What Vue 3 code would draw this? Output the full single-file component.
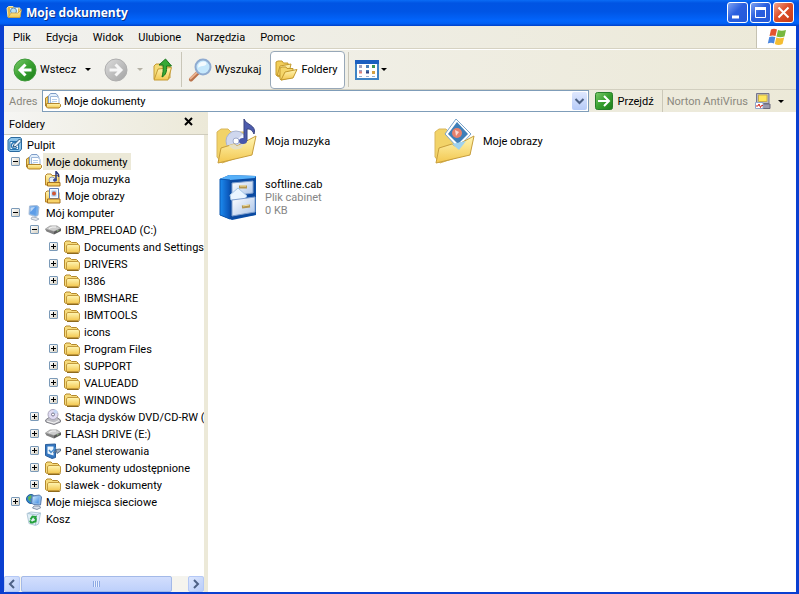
<script setup>
import { ref } from 'vue';

const menu = ['Plik', 'Edycja', 'Widok', 'Ulubione', 'Narzędzia', 'Pomoc'];

const tree = [
	{ name: 'Pulpit', icon: 'desktop', level: 0 },
	{ name: 'Moje dokumenty', icon: 'documents', level: 1, state: 'open' },
	{ name: 'Moja muzyka', icon: 'music-small', level: 2 },
	{ name: 'Moje obrazy', icon: 'pictures-small', level: 2 },
	{ name: 'Mój komputer', icon: 'computer', level: 1, state: 'open' },
	{ name: 'IBM_PRELOAD (C:)', icon: 'drive', level: 2, state: 'open' },
	{ name: 'Documents and Settings', icon: 'folder', level: 3, state: 'closed' },
	{ name: 'DRIVERS', icon: 'folder', level: 3, state: 'closed' },
	{ name: 'I386', icon: 'folder', level: 3, state: 'closed' },
	{ name: 'IBMSHARE', icon: 'folder', level: 3 },
	{ name: 'IBMTOOLS', icon: 'folder', level: 3, state: 'closed' },
	{ name: 'icons', icon: 'folder', level: 3 },
	{ name: 'Program Files', icon: 'folder', level: 3, state: 'closed' },
	{ name: 'SUPPORT', icon: 'folder', level: 3, state: 'closed' },
	{ name: 'VALUEADD', icon: 'folder', level: 3, state: 'closed' },
	{ name: 'WINDOWS', icon: 'folder', level: 3, state: 'closed' },
	{ name: 'Stacja dysków DVD/CD-RW (', icon: 'disc', level: 2, state: 'closed' },
	{ name: 'FLASH DRIVE (E:)', icon: 'drive', level: 2, state: 'closed' },
	{ name: 'Panel sterowania', icon: 'panel', level: 2, state: 'closed' },
	{ name: 'Dokumenty udostępnione', icon: 'folder', level: 2, state: 'closed' },
	{ name: 'slawek - dokumenty', icon: 'folder', level: 2, state: 'closed' },
	{ name: 'Moje miejsca sieciowe', icon: 'network', level: 1, state: 'closed' },
	{ name: 'Kosz', icon: 'bin', level: 1 }
];

const files = [
	{ name: 'Moja muzyka', icon: 'music' },
	{ name: 'Moje obrazy', icon: 'pictures' },
	{ name: 'softline.cab', icon: 'cabinet', info: ['Plik cabinet', '0 KB'] }
];

const selected = ref('Moje dokumenty');
</script>

<template>
	<svg class="sprite" aria-hidden="true">
		<defs>
			<linearGradient id="g-folder" x1="0" y1="0" x2="0" y2="1">
				<stop offset="0" stop-color="#fff6b4" />
				<stop offset="1" stop-color="#f3c74f" />
			</linearGradient>
			<linearGradient id="g-green" x1="0" y1="0" x2="1" y2="1">
				<stop offset="0" stop-color="#7ccb6b" />
				<stop offset="0.5" stop-color="#38a02f" />
				<stop offset="1" stop-color="#1b7d1a" />
			</linearGradient>
			<linearGradient id="g-gray" x1="0" y1="0" x2="1" y2="1">
				<stop offset="0" stop-color="#dcdcdc" />
				<stop offset="1" stop-color="#a2a2a2" />
			</linearGradient>
			<linearGradient id="g-blue" x1="0" y1="0" x2="1" y2="1">
				<stop offset="0" stop-color="#cfe8ff" />
				<stop offset="1" stop-color="#3f8ade" />
			</linearGradient>
			<linearGradient id="g-cab" x1="0" y1="0" x2="1" y2="0">
				<stop offset="0" stop-color="#1c8cf0" />
				<stop offset="1" stop-color="#0a51b4" />
			</linearGradient>
			<linearGradient id="g-drawer" x1="0" y1="0" x2="1" y2="1">
				<stop offset="0" stop-color="#ffffff" />
				<stop offset="1" stop-color="#a9c3e8" />
			</linearGradient>
		</defs>

		<symbol id="folder" viewBox="0 0 16 16">
			<path d="M0.500 12.500V3.500L2 2H6L7.500 3.500H12.500L14 5V13.500H2z" fill="#f6db7c" stroke="#b4892c" />
			<path d="M2.500 13.500V6.500L4 5.500H14L15.500 6.500V12.500L14 13.500z" fill="url(#g-folder)" stroke="#c39a3c" />
			<path d="M3 14.500H14.500L15.500 13.500" fill="none" stroke="#8e6a1e" />
		</symbol>
		<symbol id="title-folder" viewBox="0 0 16 16">
			<path d="M1 4L2.500 2.500H7L8.500 4H14V13H2z" fill="#e2b84b" stroke="#f6e9a8" />
			<path d="M4 4H12V11H4z" fill="#eef8ff" />
			<circle cx="7.500" cy="7" r="3" fill="#b9def5" stroke="#5b8fb5" />
			<path d="M2 13.500L5 9H12L15.500 5.500L14 13.500z" fill="url(#g-folder)" stroke="#c59631" stroke-width="0.700" />
		</symbol>
		<symbol id="documents" viewBox="0 0 16 16">
			<path d="M0.500 13V5L3 3.500V13.500z" fill="#f5d56c" stroke="#ad822a" />
			<path d="M3.500 12V3L5.500 0.500H11L13 3V12z" fill="#e4f0fc" stroke="#7f9dc8" />
			<path d="M5.500 10V3.500H12L14 5.500V11z" fill="#fff" stroke="#9db7da" />
			<path d="M7 6.500H12M7 8.500H12" stroke="#b4cdea" />
			<path d="M1.500 14V10.500H14.500L15.500 11.500V13.500L14 15H2.500z" fill="url(#g-folder)" stroke="#b3842b" />
		</symbol>
		<symbol id="music-small" viewBox="0 0 16 16">
			<path d="M0.500 14V4.500L2 3H6L7 4.500H14V14z" fill="url(#g-folder)" stroke="#b5822a" />
			<circle cx="7" cy="9" r="3" fill="#e6eefa" stroke="#8895b8" />
			<path d="M2.500 15V11.500H15V15z" fill="#f7cf62" stroke="#a8721f" />
			<path d="M11 9V0.500L13.500 3.500V6" fill="none" stroke="#2b377d" stroke-width="1.500" />
			<ellipse cx="10" cy="9" rx="2" ry="1.500" fill="#3b4a98" />
		</symbol>
		<symbol id="pictures-small" viewBox="0 0 16 16">
			<path d="M0.500 14V4.500L2 3H6L7 4.500H14V14z" fill="url(#g-folder)" stroke="#b5822a" />
			<path d="M4.500 0.500H13.500V10.500H4.500z" fill="#f8fbff" stroke="#5f7fb6" />
			<path d="M6.500 2.500H11.500V8.500H6.500z" fill="#a4cbef" />
			<circle cx="9" cy="5.500" r="2" fill="#d05532" />
			<path d="M2.500 15V11H15V15z" fill="#f8d36a" stroke="#a8721f" />
		</symbol>
		<symbol id="desktop" viewBox="0 0 16 16">
			<path d="M1 3L4 0.500H13.500L14.500 2V12L12.500 14.500H3L1 13z" fill="#8cc4ea" stroke="#29699f" />
			<path d="M3 4.500H11.500V12.500H3z" fill="#fff" stroke="#2d76ae" />
			<path d="M9.500 6.500A3 3 0 1 0 10 10" fill="none" stroke="#2c7ab8" stroke-width="1.500" />
			<path d="M6 10L7 7.500L12.500 2L14.500 4L9 9.500z" fill="#e9f4fc" stroke="#1d4f7c" />
		</symbol>
		<symbol id="computer" viewBox="0 0 16 16">
			<path d="M3.500 1L11 0.500L13 2L12 10.500L9.500 11.500L3 9.500z" fill="#75aeea" stroke="#a9bdd8" />
			<path d="M4.500 2L10.500 1.500L9.500 10L4 8.500z" fill="#5d9de8" />
			<path d="M6 12L10 12.500L13 14L10 15.500L5 14z" fill="#e4e8ee" stroke="#aab4c2" />
			<path d="M4.500 2.500L9 2L4.500 7z" fill="#fff" opacity="0.600" />
		</symbol>
		<symbol id="drive" viewBox="0 0 16 16">
			<path d="M0.500 7L5 4H12L15.500 6.500L9 9.500z" fill="#cdcdcd" stroke="#a6a6a6" />
			<path d="M0 7L9 9.500V12.500L1.500 9.500z" fill="#808080" />
			<path d="M9 9.500L16 6.500V9L9 12.500z" fill="#5a5a5a" />
			<path d="M4 6.500L7 5H11" fill="none" stroke="#f8f8f8" />
			<path d="M12 9L13.500 8.500" stroke="#9bc98c" />
		</symbol>
		<symbol id="disc" viewBox="0 0 16 16">
			<path d="M0.500 11L4 8.500H12L15.500 11V13L9 15.500L1 13z" fill="#bebec4" stroke="#818188" />
			<circle cx="8" cy="5.500" r="5" fill="#e1dcf3" stroke="#aaa7bb" />
			<path d="M8 5.500L9 0.500A5 5 0 0 1 13 4z" fill="#c6d6f4" />
			<circle cx="8" cy="5.500" r="1.500" fill="#fff" stroke="#77758d" />
			<path d="M2 12L9 14L14 11.500" fill="none" stroke="#f5f5f5" />
		</symbol>
		<symbol id="panel" viewBox="0 0 16 16">
			<path d="M0.500 1.500L10.500 1V14.500L7 15.500L0.500 12.500z" fill="#3477c0" stroke="#2b5e9c" />
			<path d="M2.500 3.500L8.500 3.500V12.500L2.500 10.500z" fill="#eff8ff" />
			<path d="M4 7L6 9.500L11 4.500" fill="none" stroke="#498dcc" stroke-width="1.500" />
			<path d="M8 9.500L12 8M11 6.500L15.500 6V8L12 10.500z" fill="#a3afbf" stroke="#60768e" />
		</symbol>
		<symbol id="network" viewBox="0 0 16 16">
			<circle cx="5" cy="5" r="4.500" fill="#3085cf" stroke="#235d98" />
			<path d="M2 3L5 1L6 3.500L4 5L5 8L2.500 6z" fill="#62b652" />
			<path d="M6 2L13.500 1L15.500 3L14.500 11L7.500 10.500L5.500 9z" fill="#8bb9ea" stroke="#5b7eaf" />
			<path d="M7 3L13 2.500L12.500 9.500L7 8.500z" fill="url(#g-blue)" />
			<path d="M8 12L13 12L15 13.500L11 15.500L6.500 14z" fill="#d9e0ea" stroke="#8392aa" />
		</symbol>
		<symbol id="bin" viewBox="0 0 16 16">
			<path d="M1 2.500L5 1L14.500 2L12.500 13L9.500 14.500L3 12.500z" fill="#e1eff7" stroke="#b3cad8" />
			<path d="M2 2.500L10.500 4L14.500 2M10.500 4L9.500 14" fill="none" stroke="#a9c2d2" />
			<path d="M4.500 8.500L6.500 5.500L9.500 6L8.500 8M10 7L9.500 10.500L7 11M4 9.500L5 11.500H7.500" fill="none" stroke="#23a13a" stroke-width="2" />
		</symbol>

		<symbol id="back" viewBox="0 0 24 24">
			<circle cx="12" cy="12" r="11" fill="url(#g-green)" stroke="#3f9a3a" />
			<path d="M18.500 12H7M12.500 6.500L7 12L12.500 17.500" fill="none" stroke="#fff" stroke-width="3" />
		</symbol>
		<symbol id="forward" viewBox="0 0 24 24">
			<circle cx="12" cy="12" r="11" fill="url(#g-gray)" stroke="#aeaeae" />
			<path d="M5.500 12H17M11.500 6.500L17 12L11.500 17.500" fill="none" stroke="#f6f6f6" stroke-width="3" />
		</symbol>
		<symbol id="up" viewBox="0 0 24 24">
			<path d="M3 21V8L5 6H9L10.500 8H19V20z" fill="#f4db75" stroke="#c59b35" />
			<path d="M3 22L7 11L20.500 9.500L17 22z" fill="url(#g-folder)" stroke="#c59b35" />
			<path d="M11 19C15 17 16 13 15.500 8H20.500L14.500 1L8 7H12C12.500 12 12 15 11 19z" fill="#37a936" stroke="#1a751b" />
		</symbol>
		<symbol id="search" viewBox="0 0 24 24">
			<path d="M10 14.500L3 21.500" stroke="#b9714a" stroke-width="4" stroke-linecap="round" />
			<path d="M9.500 14L2.500 20.500" stroke="#eab28f" stroke-width="2" stroke-linecap="round" />
			<circle cx="15" cy="9" r="7.500" fill="#c6e8fc" stroke="#8fabd0" stroke-width="2" />
			<path d="M10 10A5.500 5.500 0 0 1 16 3.500C20 4 19 8 15 8C12 8 11 9 10 10z" fill="#fff" opacity="0.800" />
		</symbol>
		<symbol id="folders" viewBox="0 0 24 24">
			<path d="M2 17V4L4 3H8L9.500 5H14V15L5 19z" fill="#f2ce58" stroke="#c3992d" />
			<path d="M3 18L6 8L17 6L15 15z" fill="url(#g-folder)" stroke="#c3992d" />
			<path d="M6 21V10L8 9H12L13 10.500H19V19L7 22z" fill="#f4d66a" stroke="#c3992d" />
			<path d="M7 22L11 14L23 11.500L19 20z" fill="url(#g-folder)" stroke="#c3992d" />
		</symbol>
		<symbol id="views" viewBox="0 0 24 20">
			<path d="M1 1H23V19H1z" fill="#fff" stroke="#3e83c4" stroke-width="2" />
			<path d="M0 0H24V4H0z" fill="#1b5fc0" />
			<path d="M4 6.500H7M4 11.500H7" stroke="#a0a0c0" stroke-width="3" />
			<path d="M11 6.500H14M11 11.500H14" stroke="#4a80b8" stroke-width="3" />
			<path d="M17 6.500H20" stroke="#3d9551" stroke-width="3" />
			<path d="M17 12.500H20" stroke="#d4a141" stroke-width="3" />
			<path d="M4 12.500H7" stroke="#e08078" stroke-width="2" />
			<path d="M11 12.500H14" stroke="#30427e" stroke-width="2" />
			<path d="M4 16.500H7M11 16.500H14M17 16.500H20" stroke="#9ab2d0" />
		</symbol>
		<symbol id="go" viewBox="0 0 18 18">
			<rect x="0.500" y="0.500" width="17" height="17" rx="2" fill="url(#g-green)" stroke="#287e2a" />
			<path d="M3 9H13M9 4L14 9L9 14" fill="none" stroke="#fff" stroke-width="2" />
		</symbol>
		<symbol id="norton" viewBox="0 0 16 16">
			<path d="M1.500 0.500H14V10.500H1.500z" fill="#b8b8c5" stroke="#75758c" />
			<path d="M3.500 2H12V8.500H3.500z" fill="#ffe65b" stroke="#c9b04a" />
			<path d="M4 11H15V15.500H4z" fill="#9a9aae" stroke="#68687c" />
			<path d="M0.500 9.500H8V15.500H0.500z" fill="#fff" stroke="#8fa6cc" />
			<path d="M1 13H3L4 11L5.500 14.500L6.500 12.500H8" fill="none" stroke="#d42a1f" />
		</symbol>
		<symbol id="flag" viewBox="0 0 20 18">
			<path d="M4 1.500Q7 0 10 1.500L8.500 8Q6 7 2.500 8z" fill="#e5542e" />
			<path d="M11 2Q14.500 3.500 19 2L17.500 8.500Q13 10 9.500 8.500z" fill="#78b83e" />
			<path d="M2.300 9Q5 7.800 8.300 9L7 15.500Q4 14 0.800 15.500z" fill="#4a86df" />
			<path d="M9.300 9.500Q13 11 17.200 9.500L15.500 16Q11.500 18 7.800 16z" fill="#f5bd31" />
		</symbol>

		<symbol id="music" viewBox="0 0 48 48">
			<path d="M3 40V15L7 12H14L17 15H31V38L8 46z" fill="#f2d368" stroke="#d9b75c" />
			<circle cx="22" cy="24" r="10" fill="#cfd7ee" stroke="#a9b4d3" />
			<path d="M22 24L29 17A10 10 0 0 1 32 23z" fill="#f5f7ff" />
			<circle cx="22" cy="24" r="3" fill="#fff" stroke="#9ea9cb" />
			<path d="M4 46L7 31L20 27L23 29L42 19L38 38z" fill="url(#g-folder)" stroke="#c79e3c" />
			<path d="M15 28A8 8 0 0 0 30 26L23 29L20 27z" fill="#e5dfc4" />
			<path d="M30 24V2C32 8 43 8 40 17C38 12 35 12 33 12V24z" fill="#4c5bad" stroke="#39447f" />
			<ellipse cx="29" cy="24" rx="4" ry="3" fill="#4757ac" />
		</symbol>
		<symbol id="pictures" viewBox="0 0 48 48">
			<path d="M3 40V15L7 12H14L17 15H32V38L8 46z" fill="#f2d368" stroke="#d9b75c" />
			<path d="M24 2L39 17L26 31L13 17z" fill="#fff" stroke="#7aa3c9" />
			<path d="M25 5L36 17L26 27L16 17z" fill="#3f7fb8" />
			<circle cx="25" cy="16" r="5" fill="#e8806c" />
			<path d="M23 13L27 15L24 19z" fill="#fff" opacity="0.700" />
			<path d="M4 46L7 31L20 27L23 29L42 19L38 38z" fill="url(#g-folder)" stroke="#c79e3c" />
			<path d="M20 27L34 24L27 33z" fill="#9fd2ee" />
		</symbol>
		<symbol id="cabinet" viewBox="-2 0 48 48">
			<path d="M4 6L13 2L40 3V42L16 47L4 42z" fill="#0a4fa8" />
			<path d="M4 6L13 2L40 3L38 6L14 8z" fill="#57b0f8" />
			<path d="M4 6L14 7V46L4 42z" fill="url(#g-cab)" stroke="#0b57af" />
			<path d="M14 7L39 5V42L14 46z" fill="#0b4aa1" />
			<path d="M16 10L37 8V20L16 23z" fill="url(#g-drawer)" stroke="#7f9fce" />
			<path d="M14 22L22 15L31 23L28 27L15 27z" fill="#e9f5ff" stroke="#a4c6e6" />
			<path d="M16 27L39 24V39L16 43z" fill="url(#g-drawer)" stroke="#7f9fce" />
			<path d="M23 14H31M26 34L34 33" stroke="#b39650" stroke-width="3" />
			<path d="M24 13H30M27 33L33 32" stroke="#f7e3a0" />
		</symbol>
	</svg>

	<div class="window">
		<header class="title-bar">
			<svg class="icon"><use href="#title-folder" /></svg>
			<h1 class="title-bar__text">Moje dokumenty</h1>
			<button class="title-bar__button" aria-label="Minimalizuj">
				<svg viewBox="0 0 19 19"><path d="M4 14H11" stroke="#fff" stroke-width="3" /></svg>
			</button>
			<button class="title-bar__button" aria-label="Maksymalizuj">
				<svg viewBox="0 0 19 19">
					<path d="M4.500 5V14.500H14.500V5" fill="none" stroke="#fff" />
					<path d="M4 5.500H15" stroke="#fff" stroke-width="3" />
				</svg>
			</button>
			<button class="title-bar__button title-bar__button--close" aria-label="Zamknij">
				<svg viewBox="0 0 19 19"><path d="M4.500 4.500L14.500 14.500M14.500 4.500L4.500 14.500" stroke="#fff" stroke-width="2" /></svg>
			</button>
		</header>

		<nav class="menu">
			<button v-for="item in menu" :key="item" class="menu__item">{{ item }}</button>
			<div class="menu__logo">
				<svg class="icon-flag"><use href="#flag" /></svg>
			</div>
		</nav>

		<div class="toolbar">
			<button class="toolbar__button">
				<svg class="icon-tool"><use href="#back" /></svg>
				<span>Wstecz</span>
				<i class="caret"></i>
			</button>
			<button class="toolbar__button toolbar__button--forward" aria-label="Dalej" disabled>
				<svg class="icon-tool"><use href="#forward" /></svg>
				<i class="caret caret--disabled"></i>
			</button>
			<button class="toolbar__button" aria-label="W górę">
				<svg class="icon-tool"><use href="#up" /></svg>
			</button>
			<span class="separator"></span>
			<button class="toolbar__button toolbar__button--search">
				<svg class="icon-tool"><use href="#search" /></svg>
				<span>Wyszukaj</span>
			</button>
			<button class="toolbar__button toolbar__button--pressed">
				<svg class="icon-tool"><use href="#folders" /></svg>
				<span>Foldery</span>
			</button>
			<span class="separator separator--tight"></span>
			<button class="toolbar__button toolbar__button--views" aria-label="Widoki">
				<svg class="icon-views"><use href="#views" /></svg>
				<i class="caret"></i>
			</button>
		</div>

		<div class="address">
			<label class="address__label" for="address">Adres</label>
			<div class="address__field">
				<svg class="icon"><use href="#documents" /></svg>
				<select id="address" class="address__select">
					<option>Moje dokumenty</option>
				</select>
				<span class="address__arrow">
					<svg viewBox="0 0 15 18"><path d="M3.500 7L7.500 11L11.500 7" fill="none" stroke="#4d6185" stroke-width="2" /></svg>
				</span>
			</div>
			<button class="address__go">
				<svg class="icon-go"><use href="#go" /></svg>
				<span>Przejdź</span>
			</button>
			<button class="address__norton">
				<span>Norton AntiVirus</span>
				<svg class="icon"><use href="#norton" /></svg>
				<i class="caret"></i>
			</button>
		</div>

		<div class="content">
			<aside class="sidebar">
				<div class="sidebar__head">
					<h2 class="sidebar__title">Foldery</h2>
					<button class="sidebar__close" aria-label="Zamknij panel">
						<svg viewBox="0 0 9 9"><path d="M1 1L8 8M8 1L1 8" stroke="#000" stroke-width="2" /></svg>
					</button>
				</div>
				<ul class="tree">
					<li v-for="node in tree" :key="node.name"
						:class="`tree__row--level-${node.level}`"
						class="tree__row">
						<span v-if="node.level" class="tree__toggle">
							<button v-if="node.state" class="tree__expander"
								:aria-label="node.state === 'open' ? 'Zwiń' : 'Rozwiń'">
								<svg viewBox="0 0 7 7">
									<path d="M1 3.500H6" stroke="#000" />
									<path v-if="node.state === 'closed'" d="M3.500 1V6" stroke="#000" />
								</svg>
							</button>
						</span>
						<svg class="icon"><use :href="`#${node.icon}`" /></svg>
						<button class="tree__label"
							:class="{ 'is-selected': selected === node.name }"
							@click="selected = node.name">
							{{ node.name }}
						</button>
					</li>
				</ul>
				<div class="scroll">
					<button class="scroll__button" aria-label="W lewo">
						<svg viewBox="0 0 14 14"><path d="M9 3L5 7L9 11" fill="none" stroke="#4d6185" stroke-width="2" /></svg>
					</button>
					<div class="scroll__track">
						<div class="scroll__thumb"><i class="scroll__grip"></i></div>
					</div>
					<button class="scroll__button" aria-label="W prawo">
						<svg viewBox="0 0 14 14"><path d="M5 3L9 7L5 11" fill="none" stroke="#4d6185" stroke-width="2" /></svg>
					</button>
				</div>
			</aside>

			<main class="files">
				<article v-for="file in files" :key="file.name" class="file">
					<svg class="icon-file"><use :href="`#${file.icon}`" /></svg>
					<div class="file__text">
						<p>{{ file.name }}</p>
						<p v-for="line in file.info" :key="line" class="file__info">{{ line }}</p>
					</div>
				</article>
			</main>
		</div>
	</div>
</template>

<style>
body {
	margin: 0;
}
</style>

<style scoped>
.sprite {
	position: absolute;
	width: 0;
	height: 0;
}

.window {
	display: flex;
	flex-direction: column;
	box-sizing: border-box;
	height: 100vh;
	border: solid #0a3fd0;
	border-width: 0 3px 2px 4px;
	background: #ece9d8;
	font-family: Roboto, Tahoma, sans-serif;
	font-size: 11px;
	line-height: 13px;
	color: #000;
}

button {
	display: flex;
	align-items: center;
	margin: 0;
	padding: 0;
	border: none;
	background: none;
	font: inherit;
	color: inherit;
	white-space: nowrap;
}

svg {
	flex-shrink: 0;
}

.icon {
	width: 16px;
	height: 16px;
}

.icon-flag {
	width: 20px;
	height: 18px;
}

.icon-tool {
	width: 24px;
	height: 24px;
}

.icon-views {
	width: 24px;
	height: 20px;
}

.icon-go {
	width: 18px;
	height: 18px;
}

.icon-file {
	width: 48px;
	height: 48px;
}

.caret {
	border: 3px solid transparent;
	border-top-color: #000;
	border-bottom: none;
}

.caret--disabled {
	border-top-color: #b5b2a6;
}

/* title bar */
.title-bar {
	display: flex;
	align-items: center;
	gap: 2px;
	box-sizing: border-box;
	height: 26px;
	margin: 0 -3px 0 -4px;
	padding: 0 5px 2px 6px;
	background: linear-gradient(#0a6cf5, #0054e3 12%, #0055e5 45%, #0265fc 80%, #0160f4 90%, #0040c8);
}

.title-bar__text {
	flex: 1;
	margin: 0 0 0 2px;
	padding-top: 2px;
	font-family: "Open Sans", sans-serif;
	font-size: 12px;
	font-weight: 700;
	line-height: 18px;
	color: #fff;
	text-shadow: 1px 1px #0a318a;
}

.title-bar__button {
	box-sizing: border-box;
	width: 21px;
	height: 21px;
	border: 1px solid #fff;
	border-radius: 3px;
	background: linear-gradient(135deg, #7fa3f2, #2a5fdf 45%, #2359d8);
}

.title-bar__button--close {
	background: linear-gradient(135deg, #f0a58d, #dd4f2a 45%, #c63c17);
}

/* menu */
.menu {
	display: flex;
	height: 22px;
	padding-left: 2px;
	border-bottom: 1px solid #d6d2c2;
	background: linear-gradient(90deg, #f1f1ee, #ece9d8);
}

.menu__item {
	padding: 0 8px 0 7px;
}

.menu__logo {
	display: flex;
	align-items: center;
	justify-content: center;
	width: 39px;
	margin-left: auto;
	border-left: 1px solid #c5c2b2;
	background: #fff;
}

/* toolbar */
.toolbar {
	display: flex;
	align-items: center;
	height: 39px;
	padding-left: 9px;
	border-top: 1px solid #fff;
	border-bottom: 1px solid #d2cfbf;
	background: linear-gradient(90deg, #f3f3f0, #ece9d8);
}

.toolbar__button {
	gap: 3px;
}

.toolbar__button .caret {
	margin-left: 6px;
}

.toolbar__button--forward {
	margin: 0 8px 0 13px;
}

.toolbar__button--search {
	margin: 0 9px 0 6px;
}

.toolbar__button--pressed {
	box-sizing: border-box;
	height: 38px;
	padding: 0 7px 0 3px;
	border: 1px solid #98a8b8;
	border-radius: 4px;
	background: #fff;
}

.toolbar__button--views .caret {
	margin-left: -1px;
}

.separator {
	width: 1px;
	height: 35px;
	margin-left: 6px;
	background: #c9c6b8;
}

.separator--tight {
	margin: 0 6px 0 3px;
}

/* address bar */
.address {
	display: flex;
	align-items: stretch;
	height: 22px;
	padding-left: 5px;
	background: linear-gradient(90deg, #f1f1ee, #ece9d8);
}

.address__label {
	align-self: center;
	width: 33px;
	color: #8a887e;
}

.address__field {
	position: relative;
	display: flex;
	flex: 1;
	align-items: center;
	box-sizing: border-box;
	padding-left: 2px;
	border: 1px solid #7f9db9;
	background: #fff;
}

.address__select {
	flex: 1;
	height: 20px;
	padding: 0 20px 0 3px;
	border: none;
	background: transparent;
	font: inherit;
	color: inherit;
	appearance: none;
}

.address__arrow {
	position: absolute;
	top: 1px;
	right: 1px;
	bottom: 1px;
	width: 15px;
	border-radius: 2px;
	background: linear-gradient(#dfe8fe, #b6cbf8);
	pointer-events: none;
}

.address__arrow svg {
	display: block;
}

.address__go {
	gap: 4px;
	padding: 0 8px 0 6px;
}

.address__norton {
	gap: 7px;
	padding: 0 12px 0 4px;
	border-left: 1px solid #cbc8b8;
	color: #8a887e;
}

/* content */
.content {
	display: flex;
	flex: 1;
	min-height: 0;
}

.sidebar {
	display: flex;
	flex-direction: column;
	box-sizing: border-box;
	width: 204px;
	border-right: 4px solid #ece9d8;
	background: #fff;
}

.sidebar__head {
	display: flex;
	align-items: center;
	justify-content: space-between;
	height: 22px;
	margin-right: -4px;
	padding: 0 15px 0 5px;
	border-bottom: 1px solid #cfccbd;
	background: linear-gradient(90deg, #f5f5f3, #ece9d8);
}

.sidebar__title {
	margin: 0;
	padding-top: 2px;
	font: inherit;
}

.sidebar__close {
	height: 18px;
	align-self: flex-start;
}

.sidebar__close svg {
	width: 9px;
	height: 9px;
}

.tree {
	flex: 1;
	min-height: 0;
	margin: 0;
	padding: 1px 0 0 3px;
	overflow: hidden;
	list-style: none;
}

.tree__row {
	display: flex;
	align-items: center;
	height: 17px;
}

.tree__row--level-2 {
	padding-left: 19px;
}

.tree__row--level-3 {
	padding-left: 38px;
}

.tree__toggle {
	box-sizing: border-box;
	flex-shrink: 0;
	width: 19px;
	padding-left: 4px;
}

.tree__expander {
	box-sizing: border-box;
	width: 9px;
	height: 9px;
	border: 1px solid #7b9ab8;
	border-radius: 1px;
	background: linear-gradient(135deg, #fff, #d5d0c2);
}

.tree__label {
	height: 17px;
	margin-left: 1px;
	padding: 2px 3px 0;
}

.tree__label.is-selected {
	background: #ece9d8;
}

.scroll {
	display: flex;
	height: 16px;
	background: #f5f4ee;
}

.scroll__button {
	box-sizing: border-box;
	width: 16px;
	height: 16px;
	border: 1px solid #b4c8f6;
	border-radius: 2px;
	background: linear-gradient(135deg, #dde7fe, #b9cdf9);
}

.scroll__track {
	flex: 1;
	padding: 0 1px;
}

.scroll__thumb {
	display: flex;
	align-items: center;
	justify-content: center;
	box-sizing: border-box;
	width: 91%;
	height: 16px;
	border: 1px solid #a3b9e8;
	border-radius: 2px;
	background: linear-gradient(#d2defd, #bdd0fb);
}

.scroll__grip {
	width: 7px;
	height: 6px;
	background: repeating-linear-gradient(90deg, #8ca9e4 0 1px, #e8effe 1px 2px);
}

/* files */
.files {
	display: grid;
	flex: 1;
	grid-template-columns: repeat(auto-fill, 218px);
	grid-auto-rows: 48px;
	align-content: start;
	gap: 8px 0;
	padding: 5px 100px 0 6px;
	background: #fff;
}

.file {
	display: flex;
	align-items: center;
	gap: 3px;
}

.file__text p {
	margin: 0;
}

.file__text .file__info {
	color: #858585;
}
</style>
